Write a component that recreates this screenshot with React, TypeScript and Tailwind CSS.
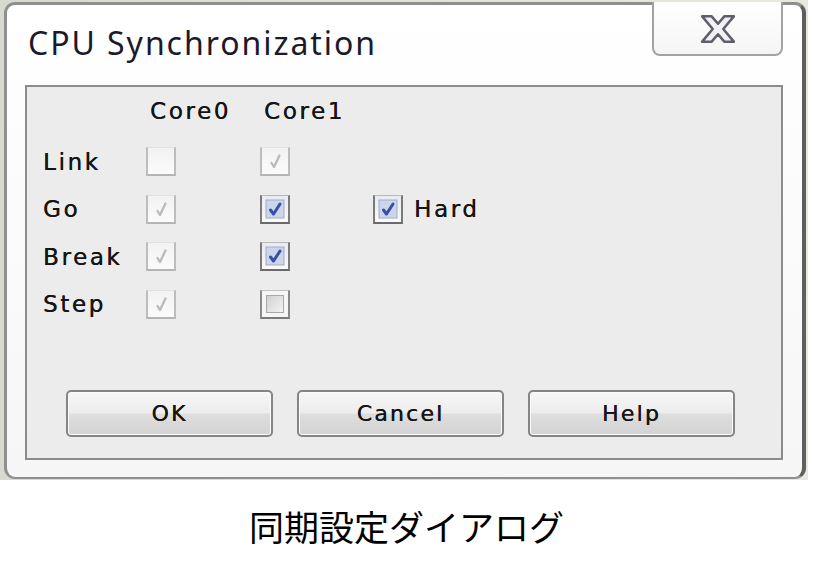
import React from "react";

type BoxKind = "disOff" | "disOn" | "on" | "off";

function Box({ kind }: { kind: BoxKind }) {
  if (kind === "on") {
    return (
      <div className="w-[30px] h-[29px] border-x-2 border-b-2 border-t border-x-[#7a7a7a] border-b-[#6a6a6a] border-t-[#b8b8b8] bg-[linear-gradient(#e8ebf2,#fafafa)] flex items-center justify-center">
        <svg width="20" height="20" viewBox="0 0 20 20">
          <rect x="1" y="1" width="18" height="18" fill="#cdd5e8" stroke="#a0abc8" strokeWidth="1" />
          <path d="M5.5 11 L8.5 15 L15 5" fill="none" stroke="#3550a6" strokeWidth="3" strokeLinecap="round" strokeLinejoin="round" />
        </svg>
      </div>
    );
  }
  if (kind === "off") {
    return (
      <div className="w-[30px] h-[29px] border-x-2 border-b-2 border-t border-x-[#8a8a8a] border-b-[#7a7a7a] border-t-[#c0c0c0] bg-[#f6f6f6] flex items-center justify-center">
        <div className="w-[18px] h-[18px] border border-[#a8a8a8] bg-[linear-gradient(135deg,#d0d0d0,#f4f4f4)]" />
      </div>
    );
  }
  return (
    <div className="w-[30px] h-[29px] border-x-2 border-b-2 border-t border-x-[#bdbdbd] border-b-[#b4b4b4] border-t-[#e2e2e2] bg-[linear-gradient(#f2f2f2,#fbfbfb)] flex items-center justify-center">
      {kind === "disOn" ? (
        <svg width="20" height="20" viewBox="0 0 20 20">
          <path d="M6.5 12 L9 16 L14.5 4.5" fill="none" stroke="#bababa" strokeWidth="2.3" strokeLinecap="round" strokeLinejoin="round" />
        </svg>
      ) : null}
    </div>
  );
}

const lbl = "font-['DejaVu_Sans',sans-serif] text-[23px] tracking-[2.6px] text-[#151515] leading-[26px] [text-shadow:0.35px_0_0_#151515]";

function Row({ label, a, b, extra }: { label: string; a: BoxKind; b: BoxKind; extra?: boolean }) {
  return (
    <div className="h-[47.5px] flex items-center">
      <div className={`w-[103px] ${lbl}`}>{label}</div>
      <div className="w-[114px]">
        <Box kind={a} />
      </div>
      <div className="w-[113px]">
        <Box kind={b} />
      </div>
      {extra ? (
        <div className="flex items-center gap-[11px]">
          <Box kind="on" />
          <span className={lbl}>Hard</span>
        </div>
      ) : null}
    </div>
  );
}

function Btn({ children }: { children: React.ReactNode }) {
  return (
    <div className="w-[207px] h-[47px] rounded-[5px] border-2 border-[#858585] bg-[linear-gradient(#f6f6f6,#ededed_48%,#dedede_52%,#d3d3d3)] shadow-[inset_0_0_0_1px_#fbfbfb] flex items-center justify-center">
      <span className="font-['DejaVu_Sans',sans-serif] text-[22px] tracking-[2.2px] text-[#151515] leading-none [text-shadow:0.35px_0_0_#151515]">{children}</span>
    </div>
  );
}

export default function App() {
  return (
    <div className="w-[813px] h-[574px] bg-white flex flex-col overflow-hidden">
      <div className="h-[480px] flex">
        <div className="w-[808px] h-[480px] bg-[linear-gradient(90deg,#d7dbcf,#e6e9e0)] pl-[4px] pr-[2px] pt-[2px] pb-[1px] flex">
          <div className="flex-1 rounded-[11px] border-l-[3px] border-t-[3px] border-b-[2px] border-r-[4px] border-[#8f8f8f] border-r-[#5e5e5e] bg-[linear-gradient(#ffffff,#f6f6f6)] flex flex-col">
            <div className="h-[80px] flex items-start justify-between">
              <div className="pl-[21px] pt-[17px] font-['Noto_Sans',sans-serif] text-[32px] leading-[42px] tracking-[1.95px] text-[#1a1a2a]">
                CPU Synchronization
              </div>
              <div className="mr-[19px] mt-[-3px] w-[131px] h-[54px] rounded-b-[8px] border-2 border-t-0 border-[#a2a2a2] bg-[linear-gradient(#ffffff,#f5f5f5)] flex items-center justify-center pt-[1px]">
                <svg width="38" height="32" viewBox="0 0 36 30">
                  <polygon
                    points="3,3 12,3 18,10 24,3 33,3 23,15 33,27 24,27 18,20 12,27 3,27 13,15"
                    fill="#f2f2f4"
                    stroke="#5e5e6e"
                    strokeWidth="2.4"
                    strokeLinejoin="round"
                  />
                </svg>
              </div>
            </div>
            <div className="ml-[18px] mr-[19px] h-[375px] border-2 border-[#8c8c8c] bg-[#ececec] flex flex-col">
              <div className="pl-[16px]">
                <div className="h-[51px] flex pt-[11px]">
                  <div className="w-[103px]" />
                  <div className={`w-[114px] pl-[4px] ${lbl}`}>Core0</div>
                  <div className={`w-[113px] pl-[4px] ${lbl}`}>Core1</div>
                </div>
                <Row label="Link" a="disOff" b="disOn" />
                <Row label="Go" a="disOn" b="on" extra />
                <Row label="Break" a="disOn" b="on" />
                <Row label="Step" a="disOn" b="off" />
              </div>
              <div className="mt-auto mb-[21px] pl-[39px] flex gap-[24px]">
                <Btn>OK</Btn>
                <Btn>Cancel</Btn>
                <Btn>Help</Btn>
              </div>
            </div>
          </div>
        </div>
        <div className="flex-1 bg-white" />
      </div>
      <div className="flex-1 flex items-center justify-center pb-[4px]">
        <span className="font-['Noto_Sans_CJK_JP',sans-serif] text-[35px] leading-none text-black">同期設定ダイアログ</span>
      </div>
    </div>
  );
}
